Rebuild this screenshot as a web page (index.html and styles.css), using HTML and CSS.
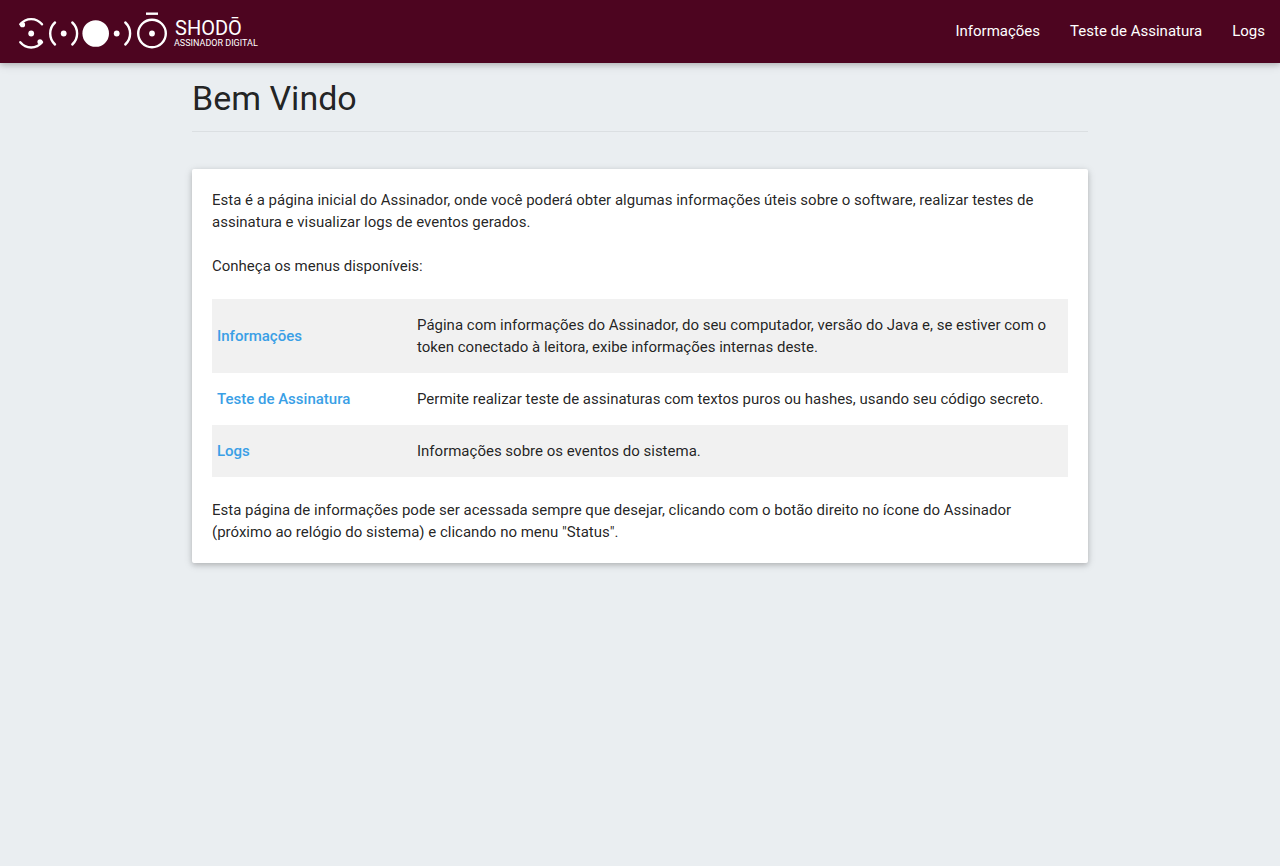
FILE: index.html
```html
<!DOCTYPE html>
<html lang="pt-BR">
<head>
<meta charset="utf-8">
<meta name="viewport" content="width=device-width, initial-scale=1">
<title>Shodō Assinador Digital</title>
<link rel="stylesheet" href="styles.css">
</head>
<body>
<header class="navbar">
  <a class="brand" href="#" aria-label="Shodō Assinador Digital">
    <svg class="logo" width="250" height="63" viewBox="0 0 250 63" fill="none" stroke="#fff" stroke-width="2.4" stroke-linecap="round">
      <path d="M5.3 24.3A14 14 0 0 1 27 24.3M5.3 42.3A14 14 0 0 0 27 42.3"/>
      <path d="M40 22.5A15 15 0 0 0 40 44.5M57.3 22.5A15 15 0 0 1 57.3 44.5"/>
      <path d="M110.3 22.500A15 15 0 0 1 110.3 44.5"/>
      <circle cx="137" cy="33.500" r="13.8"/>
      <path d="M131 13.7h12" stroke-linecap="butt"/>
      <g fill="#fff" stroke="none">
        <circle cx="7.5" cy="24.7" r="2.6"/>
        <circle cx="25" cy="41.8" r="2.6"/>
        <circle cx="16.2" cy="33.5" r="2.9"/>
        <circle cx="48.7" cy="33.5" r="2.9"/>
        <circle cx="80.7" cy="33.5" r="13.3"/>
        <circle cx="101.7" cy="33.5" r="2.9"/>
        <circle cx="137" cy="33.5" r="2.9"/>
      </g>
      <text class="logo-name" x="160" y="35">SHODŌ</text>
      <text class="logo-tagline" x="159" y="46">ASSINADOR DIGITAL</text>
    </svg>
  </a>
  <nav class="menu">
    <a class="menu-link" href="#informacoes">Informações</a>
    <a class="menu-link" href="#teste">Teste de Assinatura</a>
    <a class="menu-link" href="#logs">Logs</a>
  </nav>
</header>
<main class="container">
  <h1 class="page-title">Bem Vindo</h1>
  <section class="card">
    <p>Esta é a página inicial do Assinador, onde você poderá obter algumas informações úteis sobre o software, realizar testes de assinatura e visualizar logs de eventos gerados.</p>
    <p>Conheça os menus disponíveis:</p>
    <table class="menus">
      <tbody>
        <tr>
          <th scope="row"><a href="#informacoes">Informações</a></th>
          <td>Página com informações do Assinador, do seu computador, versão do Java e, se estiver com o token conectado à leitora, exibe informações internas deste.</td>
        </tr>
        <tr>
          <th scope="row"><a href="#teste">Teste de Assinatura</a></th>
          <td>Permite realizar teste de assinaturas com textos puros ou hashes, usando seu código secreto.</td>
        </tr>
        <tr>
          <th scope="row"><a href="#logs">Logs</a></th>
          <td>Informações sobre os eventos do sistema.</td>
        </tr>
      </tbody>
    </table>
    <p>Esta página de informações pode ser acessada sempre que desejar, clicando com o botão direito no ícone do Assinador (próximo ao relógio do sistema) e clicando no menu "Status".</p>
  </section>
</main>
</body>
</html>
```
FILE: styles.css
```css
* {
  box-sizing: border-box;
}

body {
  min-height: 100vh;
  margin: 0;
  background: #eaeef1;
  color: rgba(0, 0, 0, 0.87);
  font: 15px/22px Roboto, sans-serif;
}

a {
  text-decoration: none;
}

.navbar {
  display: flex;
  justify-content: space-between;
  background: #4d0520;
  box-shadow: 0 2px 5px 0 rgba(0, 0, 0, 0.16), 0 2px 10px 0 rgba(0, 0, 0, 0.12);
}

.brand {
  padding-left: 15px;
}

.logo {
  display: block;
}

.logo-name,
.logo-tagline {
  fill: #fff;
  stroke: none;
  font-family: Roboto, sans-serif;
  font-weight: 400;
}

.logo-name {
  font-size: 20px;
}

.logo-tagline {
  font-size: 9px;
}

.menu {
  display: flex;
}

.menu-link {
  padding: 20px 15px;
  color: #fff;
}

.container {
  width: 70%;
  margin: 0 auto;
  padding-bottom: 40px;
}

.page-title {
  margin: 0 0 37px;
  padding: 15px 0 13px;
  border-bottom: 1px solid #dbdfe2;
  font-size: 34px;
  line-height: 40px;
  font-weight: 400;
}

.card {
  padding: 20px;
  border-radius: 2px;
  background: #fff;
  box-shadow: 0 2px 5px 0 rgba(0, 0, 0, 0.16), 0 2px 10px 0 rgba(0, 0, 0, 0.12);
}

.card p {
  margin: 0 0 22px;
}

.card p:last-child {
  margin-bottom: 0;
}

.menus {
  width: 100%;
  margin-bottom: 22px;
  border-collapse: collapse;
}

.menus th,
.menus td {
  padding: 15px 5px;
  text-align: left;
  vertical-align: middle;
}

.menus th {
  width: 200px;
  font-weight: 500;
}

.menus a {
  color: #3a9fe6;
}

.menus tr:nth-child(odd) {
  background: #f1f1f1;
}
```
